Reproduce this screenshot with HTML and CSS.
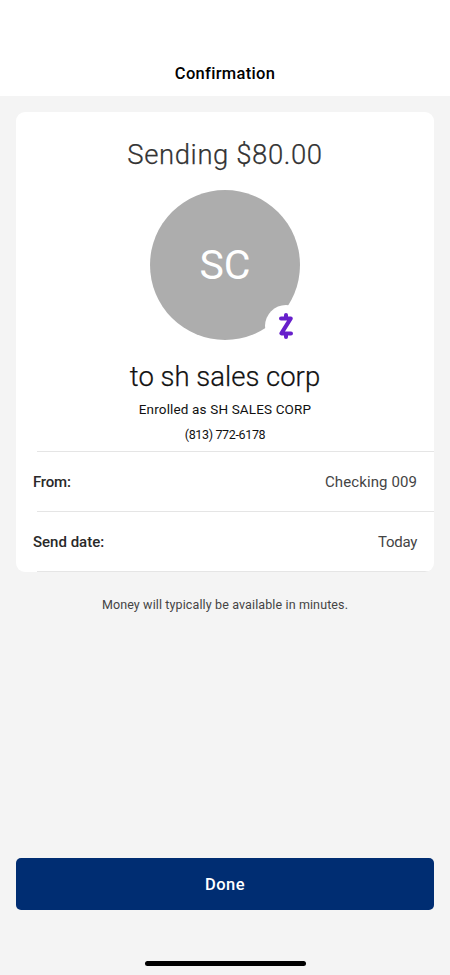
FILE: index.html
```html
<!DOCTYPE html>
<html lang="en">
<head>
<meta charset="utf-8">
<meta name="viewport" content="width=device-width, initial-scale=1">
<title>Confirmation</title>
<link rel="stylesheet" href="styles.css">
</head>
<body>
<div class="screen">
  <header class="topbar"><h1 class="title">Confirmation</h1></header>
  <main class="content">
    <section class="card">
      <div class="summary">
        <p class="amount">Sending $80.00</p>
        <div class="avatar">
          <span class="initials">SC</span>
          <span class="badge">
            <svg class="zelle" viewBox="0 0 14 26" aria-hidden="true">
              <path d="M2 5.4H11.8L2.4 20.4H12" fill="none" stroke="#6720cb" stroke-width="4" stroke-linejoin="round" stroke-linecap="round"/>
              <path d="M7 2V4M7 21.5V24" fill="none" stroke="#6720cb" stroke-width="4" stroke-linecap="round"/>
            </svg>
          </span>
        </div>
        <h2 class="recipient">to sh sales corp</h2>
        <p class="enrolled">Enrolled as SH SALES CORP</p>
        <p class="phone">(813) 772-6178</p>
      </div>
      <dl class="details">
        <div class="row"><dt class="label from">From:</dt><dd class="value account">Checking 009</dd></div>
        <div class="row"><dt class="label date">Send date:</dt><dd class="value day">Today</dd></div>
      </dl>
    </section>
    <p class="note">Money will typically be available in minutes.</p>
  </main>
  <footer class="footer">
    <button class="done" type="button">Done</button>
    <div class="home-indicator"></div>
  </footer>
</div>
</body>
</html>
```

FILE: styles.css
```css
* { box-sizing: border-box; margin: 0; padding: 0; }
body {
  font-family: Roboto, "Liberation Sans", sans-serif;
  background: #f4f4f4;
  color: #111;
}
.screen { display: flex; flex-direction: column; width: 450px; height: 975px; }
.topbar {
  flex: none;
  height: 96px;
  padding-top: 64px;
  background: #fff;
  text-align: center;
}
.title { font-size: 16.5px; line-height: 20px; font-weight: 500; letter-spacing: 0.3px; color: #000; }
.content { flex: 1; padding: 16px 16px 0; }
.card { height: 460px; border-radius: 9px; background: #fff; overflow: hidden; }
.summary {
  display: flex;
  flex-direction: column;
  align-items: center;
  height: 339px;
  padding-top: 25px;
}
.amount { font-size: 27.5px; line-height: 36px; font-weight: 300; letter-spacing: 0.6px; color: #333; -webkit-text-stroke: 0.25px #333; }
.avatar {
  position: relative;
  display: flex;
  align-items: center;
  justify-content: center;
  width: 150px;
  height: 150px;
  margin-top: 17px;
  border-radius: 50%;
  background: #adadad;
}
.initials { font-size: 41px; line-height: 50px; color: #fff; }
.badge {
  position: absolute;
  left: 115px;
  top: 115px;
  display: flex;
  align-items: center;
  justify-content: center;
  width: 42px;
  height: 42px;
  border-radius: 50%;
  background: #fff;
}
.zelle { width: 14px; height: 26px; }
.recipient { margin-top: 18px; font-size: 27.5px; line-height: 38px; font-weight: 300; letter-spacing: 0; -webkit-text-stroke: 0.25px #111; }
.enrolled { margin-top: 4px; font-size: 13.5px; line-height: 18px; letter-spacing: 0.15px; }
.phone { margin-top: 9px; font-size: 12.5px; line-height: 16px; letter-spacing: -0.35px; }
.details { display: flex; flex-direction: column; }
.row {
  display: flex;
  justify-content: space-between;
  align-items: center;
  height: 60px;
  padding: 2px 17px 0;
  background: linear-gradient(#e5e5e5, #e5e5e5) 21px 0 / 100% 1px no-repeat;
}
.row:last-child { height: 61px; padding-bottom: 1px; background:
  linear-gradient(#e5e5e5, #e5e5e5) 21px 0 / 100% 1px no-repeat,
  linear-gradient(#e5e5e5, #e5e5e5) 21px 100% / 100% 1px no-repeat; }
.label { font-size: 15px; line-height: 20px; font-weight: 500; color: #292929; }
.from { letter-spacing: -0.2px; }
.value { font-size: 15px; line-height: 20px; color: #444; }
.account { letter-spacing: 0.1px; }
.day { letter-spacing: -0.3px; }
.note { margin-top: 24px; font-size: 12.5px; line-height: 18px; letter-spacing: 0.12px; text-align: center; color: #444; }
.footer { flex: none; height: 117px; padding: 0 16px; }
.done {
  display: block;
  width: 100%;
  height: 52px;
  padding-top: 2px;
  border: 0;
  border-radius: 5px;
  background: #002d72;
  color: #fff;
  font: 500 16.5px/20px Roboto, "Liberation Sans", sans-serif;
  letter-spacing: 0.4px;
}
.home-indicator { width: 161px; height: 5px; margin: 51px auto 0; border-radius: 3px; background: #000; }
```
